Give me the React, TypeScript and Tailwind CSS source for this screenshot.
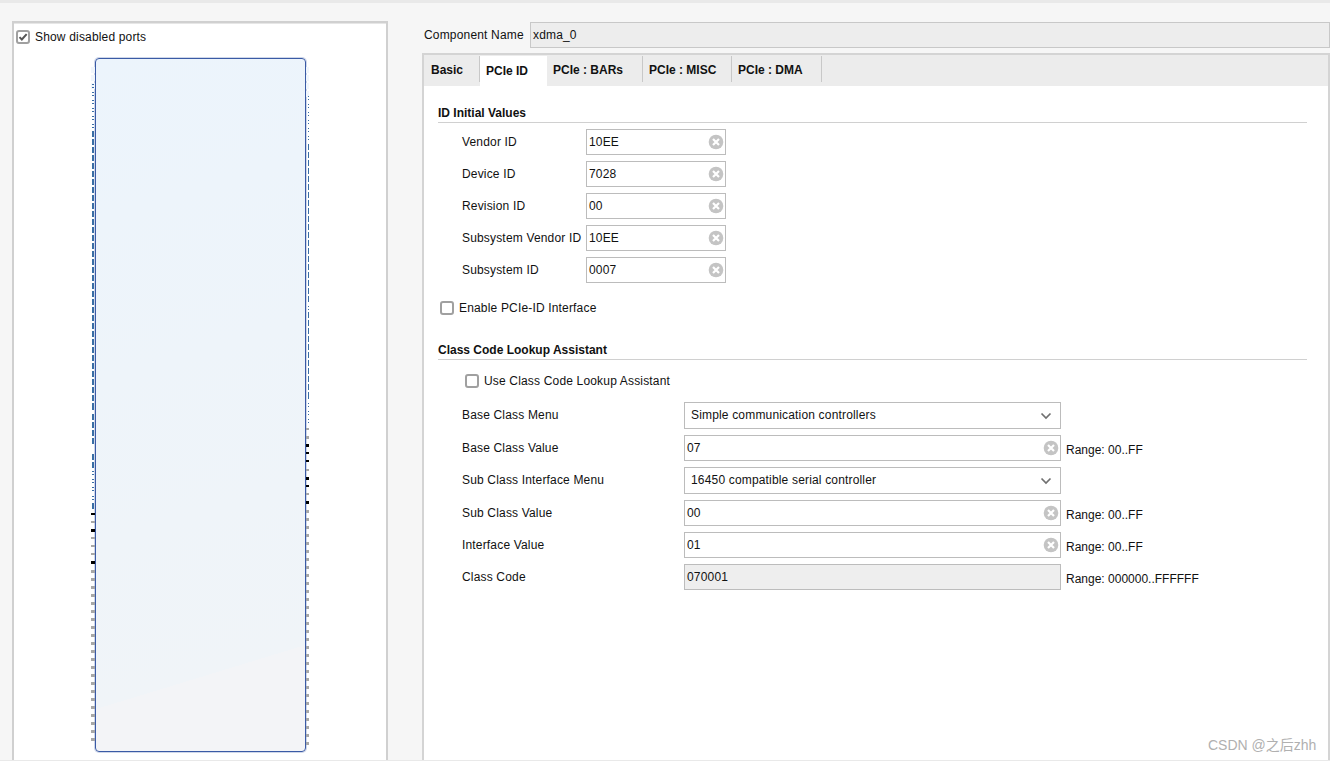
import React from "react";

type Tick = { y: number; h: number; color: string; x: number; w: number };

const BLUE = "#3a6ea5";
const GREY = "#a8a8a8";
const BLACK = "#000000";

function range(from: number, to: number, step: number) {
  const out: number[] = [];
  for (let v = from; v <= to; v += step) out.push(v);
  return out;
}

// left side pins of the block, page coordinates
const leftTicks: Tick[] = [
  ...range(67, 83, 8).map((y) => ({ y, h: 6, color: "#f1f6fc", x: 91, w: 4 })),
  ...range(84, 124, 8).flatMap((y) => [
    { y, h: 1, color: BLUE, x: 92, w: 2 },
    { y: y + 3, h: 1, color: BLUE, x: 92, w: 2 },
  ]),
  ...range(131, 404, 8).map((y) => ({ y, h: 6, color: BLUE, x: 92, w: 2 })),
  { y: 406, h: 1, color: BLUE, x: 92, w: 2 },
  { y: 409, h: 1, color: BLUE, x: 92, w: 2 },
  ...range(414, 438, 8).map((y) => ({ y, h: 6, color: BLUE, x: 92, w: 2 })),
  ...range(454, 462, 8).map((y) => ({ y, h: 6, color: BLUE, x: 92, w: 2 })),
  ...[471, 474, 479, 482, 487, 490, 496, 499].map((y) => ({ y, h: 1, color: BLUE, x: 92, w: 2 })),
  { y: 503, h: 6, color: BLUE, x: 92, w: 2 },
  { y: 513, h: 2, color: BLACK, x: 91, w: 4 },
  { y: 521, h: 2, color: GREY, x: 91, w: 4 },
  { y: 529, h: 3, color: BLACK, x: 91, w: 4 },
  ...[537, 545, 553].map((y) => ({ y, h: 2, color: GREY, x: 91, w: 4 })),
  { y: 561, h: 3, color: BLACK, x: 91, w: 4 },
  ...range(570, 738, 8).map((y) => ({ y, h: 3, color: GREY, x: 91, w: 4 })),
];

// right side pins
const rightTicks: Tick[] = [
  ...range(67, 91, 8).map((y) => ({ y, h: 6, color: "#f1f6fc", x: 306, w: 3 })),
  ...range(96, 136, 8).flatMap((y) => [
    { y, h: 1, color: BLUE, x: 308, w: 1 },
    { y: y + 3, h: 1, color: BLUE, x: 308, w: 1 },
  ]),
  ...range(144, 300, 8).map((y) => ({ y, h: 6, color: BLUE, x: 308, w: 1 })),
  { y: 306, h: 1, color: BLUE, x: 308, w: 1 },
  { y: 309, h: 1, color: BLUE, x: 308, w: 1 },
  ...range(312, 392, 8).map((y) => ({ y, h: 6, color: BLUE, x: 308, w: 1 })),
  ...range(395, 419, 8).flatMap((y) => [
    { y, h: 1, color: BLUE, x: 308, w: 1 },
    { y: y + 3, h: 1, color: BLUE, x: 308, w: 1 },
  ]),
  { y: 428, h: 2, color: GREY, x: 306, w: 3 },
  { y: 436, h: 3, color: GREY, x: 306, w: 3 },
  { y: 444, h: 3, color: BLACK, x: 306, w: 3 },
  { y: 452, h: 2, color: BLACK, x: 306, w: 3 },
  { y: 460, h: 2, color: BLACK, x: 306, w: 3 },
  { y: 469, h: 2, color: GREY, x: 306, w: 3 },
  { y: 477, h: 3, color: BLACK, x: 306, w: 3 },
  { y: 485, h: 2, color: BLACK, x: 306, w: 3 },
  { y: 493, h: 2, color: GREY, x: 306, w: 3 },
  { y: 501, h: 3, color: BLACK, x: 306, w: 3 },
  ...range(510, 742, 8).map((y) => ({ y, h: 3, color: GREY, x: 306, w: 3 })),
];

function Pins() {
  // svg is placed so that its user units are page pixels
  return (
    <svg className="absolute left-[-6px] top-[-1px] h-[694px] w-[221px]" viewBox="90 58 221 694">
      {[...leftTicks, ...rightTicks].map((t, i) => (
        <rect key={i} x={t.x} y={t.y} width={t.w} height={t.h} fill={t.color} />
      ))}
    </svg>
  );
}

function ClearIcon() {
  return (
    <svg width="16" height="16" viewBox="0 0 16 16" className="shrink-0">
      <circle cx="8" cy="8" r="7.3" fill="#c4c4c4" />
      <path d="M5 5 11 11M11 5 5 11" stroke="#fff" strokeWidth="2.2" />
    </svg>
  );
}

function Chevron() {
  return (
    <svg width="12" height="8" viewBox="0 0 12 8" className="shrink-0">
      <path d="M1.5 1.5 6 6l4.5-4.5" fill="none" stroke="#707070" strokeWidth="1.7" />
    </svg>
  );
}

function Checkbox({ checked = false }: { checked?: boolean }) {
  return (
    <span className="flex h-[14px] w-[14px] shrink-0 items-center justify-center rounded-[3px] border-2 border-[#a0a0a0] bg-white">
      {checked && (
        <svg width="12" height="12" viewBox="0 0 12 12">
          <path d="M1.8 6.2 4.6 9 10.4 2.6" fill="none" stroke="#555" strokeWidth="2.4" />
        </svg>
      )}
    </span>
  );
}

function TextInput({ value, className }: { value: string; className: string }) {
  return (
    <div className={`flex h-[26px] items-center justify-between border border-[#bcbcbc] bg-white pl-[2px] pr-[1px] ${className}`}>
      <span>{value}</span>
      <ClearIcon />
    </div>
  );
}

function Select({ value }: { value: string }) {
  return (
    <div className="flex h-[27px] w-[377px] items-center justify-between border border-[#bcbcbc] bg-white pl-[6px] pr-[8px]">
      <span className="pb-[2px]">{value}</span>
      <Chevron />
    </div>
  );
}

function Heading({ title }: { title: string }) {
  return (
    <div className="mr-[21px] border-b border-[#d0d0d0] pb-[1px] pt-[1px] font-bold leading-[16px] tracking-normal">{title}</div>
  );
}

const TABS = [
  { label: "Basic", width: "w-[55px]" },
  { label: "PCIe ID", width: "w-[67px]", active: true },
  { label: "PCIe : BARs", width: "w-[96px]" },
  { label: "PCIe : MISC", width: "w-[89px]" },
  { label: "PCIe : DMA", width: "w-[90px]" },
];

const ID_ROWS = [
  { label: "Vendor ID", value: "10EE" },
  { label: "Device ID", value: "7028" },
  { label: "Revision ID", value: "00" },
  { label: "Subsystem Vendor ID", value: "10EE" },
  { label: "Subsystem ID", value: "0007" },
];

function Range({ text }: { text: string }) {
  return <span className="ml-[5px] mt-[3px] tracking-normal">{text}</span>;
}

export default function App() {
  return (
    <div className="relative flex h-[761px] w-[1330px] flex-col overflow-hidden bg-[#f6f6f6] font-['Liberation_Sans',Arial,sans-serif] text-[12px] tracking-[0.17px] text-[#111]">
      <div className="h-[3px] shrink-0 bg-[#e9e9e9]" />
      <div className="flex min-h-0 flex-1">
        {/* left: symbol preview */}
        <div className="ml-[12px] mt-[18px] flex w-[376px] flex-col border-2 border-b-0 border-[#d0d0d0] bg-white">
          <div className="h-[1px] bg-[#e6e6e6]" />
          <div className="ml-[2px] mt-[5px] flex h-[14px] items-center gap-[5px] pt-[1px]">
            <Checkbox checked />
            <span>Show disabled ports</span>
          </div>
          <div className="relative ml-[81px] mt-[15px] h-[694px] w-[211px] rounded-[4px] border border-[#3a5aa5] bg-[linear-gradient(163deg,#ecf4fc_0%,#f0f4f8_86%,#f3f4f7_86%,#f3f4f7_100%)] shadow-[0_0_0_1px_rgba(63,95,168,0.25)]">
            <Pins />
          </div>
        </div>

        {/* right: customisation tabs */}
        <div className="ml-[34px] flex min-w-0 flex-1 flex-col">
          <div className="mt-[19px] flex items-center">
            <span className="ml-[2px] w-[106px]">Component Name</span>
            <div className="flex h-[26px] flex-1 items-center border border-[#c8c8c8] bg-[#ededed] pl-[2px]">xdma_0</div>
          </div>
          <div className="mt-[5px] flex min-h-0 flex-1 flex-col border-2 border-b-0 border-[#d4d4d4] bg-white">
            <div className="flex h-[31px] shrink-0 items-stretch bg-[#ececec] pl-[1px] pt-[1px] font-bold tracking-normal">
              {TABS.map((tab) => (
                <div
                  key={tab.label}
                  className={`flex items-center pl-[6px] ${tab.width} ${tab.active ? "bg-white" : "mb-[4px] border-r border-[#c8c8c8] pt-[2px]"}`}
                >
                  {tab.label}
                </div>
              ))}
            </div>
            <div className="pl-[14px] pt-[18px]">
              <Heading title="ID Initial Values" />
              <div className="ml-[24px] mt-[6px] flex flex-col gap-[6px]">
                {ID_ROWS.map((row) => (
                  <div key={row.label} className="flex items-center">
                    <span className="w-[124px] whitespace-nowrap">{row.label}</span>
                    <TextInput value={row.value} className="w-[140px]" />
                  </div>
                ))}
              </div>
              <div className="ml-[2px] mt-[16px] flex items-center gap-[5px]">
                <Checkbox />
                <span>Enable PCIe-ID Interface</span>
              </div>
              <div className="mt-[24px]">
                <Heading title="Class Code Lookup Assistant" />
              </div>
              <div className="ml-[27px] mt-[12px] flex items-center gap-[5px]">
                <Checkbox />
                <span>Use Class Code Lookup Assistant</span>
              </div>
              <div className="ml-[24px] mt-[12px] flex flex-col gap-[6px]">
                <div className="flex items-center">
                  <span className="w-[222px] pb-[2px]">Base Class Menu</span>
                  <Select value="Simple communication controllers" />
                </div>
                <div className="flex items-center">
                  <span className="w-[222px]">Base Class Value</span>
                  <TextInput value="07" className="w-[377px]" />
                  <Range text="Range: 00..FF" />
                </div>
                <div className="flex items-center">
                  <span className="w-[222px] pb-[2px]">Sub Class Interface Menu</span>
                  <Select value="16450 compatible serial controller" />
                </div>
                <div className="flex items-center">
                  <span className="w-[222px]">Sub Class Value</span>
                  <TextInput value="00" className="w-[377px]" />
                  <Range text="Range: 00..FF" />
                </div>
                <div className="flex items-center">
                  <span className="w-[222px]">Interface Value</span>
                  <TextInput value="01" className="w-[377px]" />
                  <Range text="Range: 00..FF" />
                </div>
                <div className="flex items-center">
                  <span className="w-[222px]">Class Code</span>
                  <div className="flex h-[26px] w-[377px] items-center border border-[#bcbcbc] bg-[#eeeeee] pl-[2px]">070001</div>
                  <Range text="Range: 000000..FFFFFF" />
                </div>
              </div>
            </div>
          </div>
        </div>
      </div>
      <div className="h-[1px] shrink-0 bg-[#e9e9e9]" />
      {/* site watermark */}
      <span className="absolute left-[1208px] top-[735px] font-['Liberation_Sans','Noto_Sans_CJK_SC',sans-serif] text-[14px] tracking-normal text-[#b0b0b0]">
        CSDN @之后zhh
      </span>
    </div>
  );
}
